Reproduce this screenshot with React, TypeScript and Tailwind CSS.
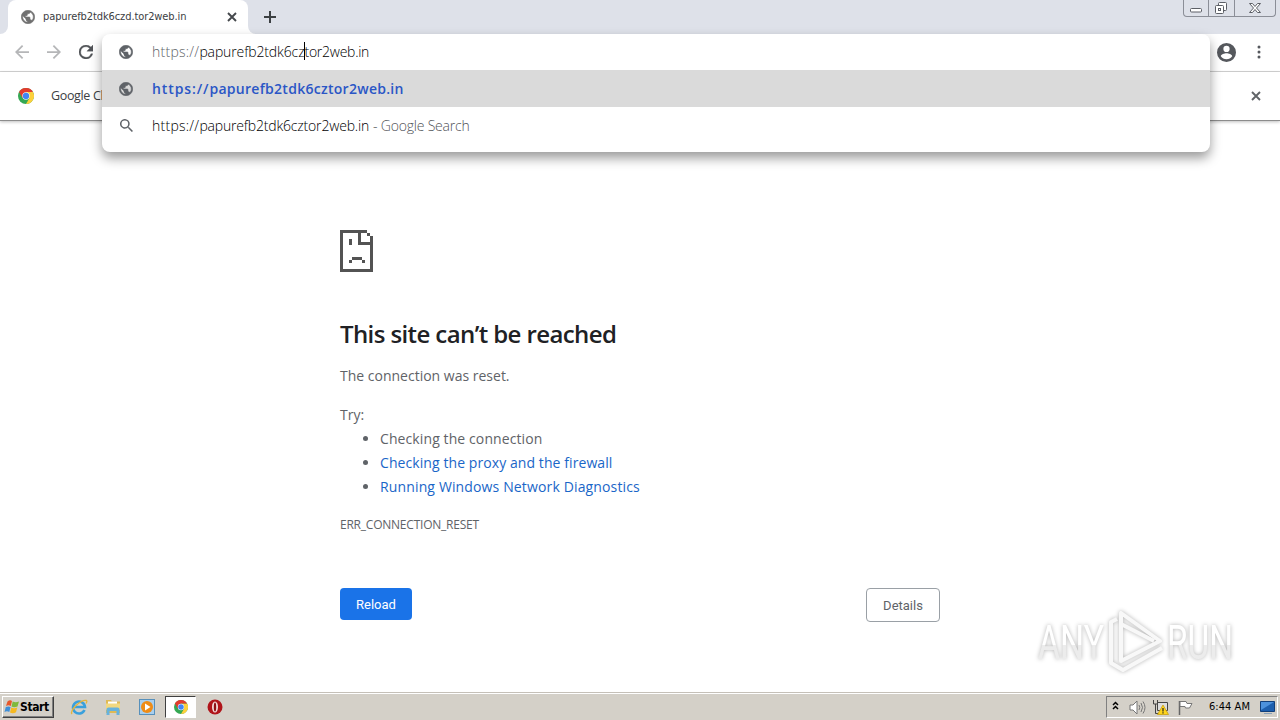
import React from 'react';

const GlobeIcon = ({ size, color }: { size: number; color: string }) => (
  <svg width={size} height={size} viewBox="1.500 1.500 21 21" fill={color} stroke={color} strokeWidth=".9" className="shrink-0">
    <path d="M12 2C6.480 2 2 6.480 2 12s4.480 10 10 10 10-4.480 10-10S17.520 2 12 2zm-1 17.930c-3.950-.490-7-3.850-7-7.930 0-.620.080-1.210.210-1.790L9 15v1c0 1.100.900 2 2 2v1.930zm6.900-2.540c-.260-.810-1-1.390-1.900-1.390h-1v-3c0-.550-.450-1-1-1H8v-2h2c.550 0 1-.450 1-1V7h2c1.100 0 2-.900 2-2v-.410c2.930 1.190 5 4.060 5 7.410 0 2.080-.800 3.970-2.100 5.390z" />
  </svg>
);

const ChromeIcon = ({ size }: { size: number }) => (
  <svg width={size} height={size} viewBox="0 0 48 48" className="shrink-0">
    <circle cx="24" cy="24" r="24" fill="#34a853" />
    <path d="M24 12H44.800A24 24 0 0 1 24 48L34.400 30Z" fill="#fdd03b" />
    <path d="M3.200 12A24 24 0 0 1 44.800 12H24L13.600 30Z" fill="#e33b2e" />
    <circle cx="24" cy="24" r="11" fill="#fff" />
    <circle cx="24" cy="24" r="9.500" fill="#4285f4" />
  </svg>
);

const CloseIcon = ({ size, color }: { size: number; color: string }) => (
  <svg width={size} height={size} viewBox="0 0 10 10" stroke={color} strokeWidth="1.900" className="shrink-0">
    <path d="M1 1 9 9M9 1 1 9" />
  </svg>
);

const TabStrip = () => (
  <div className="flex h-[34px] bg-[#dee1e9]">
    <div className="h-full w-2 bg-white">
      <div className="h-full w-full rounded-br-lg bg-[#dee1e9]" />
    </div>
    <div className="flex h-full w-60 items-center rounded-t-lg bg-white pl-[13px] pr-[11px]">
      <GlobeIcon size={14} color="#707070" />
      <span className="ml-2 mt-px flex-1 whitespace-nowrap font-['DejaVu_Sans_Condensed','DejaVu_Sans',sans-serif] text-[11px] tracking-[-0.100px] text-[#3c4043]">
        papurefb2tdk6czd.tor2web.in
      </span>
      <CloseIcon size={10} color="#45484c" />
    </div>
    <div className="h-full w-2 bg-white">
      <div className="h-full w-full rounded-bl-lg bg-[#dee1e9]" />
    </div>
    <svg width="12" height="12" viewBox="0 0 12 12" stroke="#3c4043" strokeWidth="2" className="ml-2 mt-[11px]">
      <path d="M6 0V12M0 6H12" />
    </svg>
    <div className="ml-auto mr-[4px] flex h-[17px] w-[93px] rounded-b-[4px] border border-t-0 border-[#8b8e97]">
      <svg width="91" height="16" viewBox="0 0 91 16" fill="none" stroke="#5c5f66">
        <path d="M24.500 0V16M50.500 0V16" stroke="#8b8e97" />
        <rect x="6.500" y="8.500" width="11" height="3.500" rx="1" fill="#fff" />
        <rect x="34.500" y="2.500" width="8" height="8" rx="1" fill="#fff" />
        <rect x="31.500" y="5.500" width="8" height="8" rx="1" fill="#fff" />
        <rect x="34.500" y="8.500" width="2" height="2" />
        <path d="M65.500 3.500h3l2.500 3 2.500-3h3l-4 4.500 4 4.500h-3l-2.500-3-2.500 3h-3l4-4.500z" fill="#fff" />
      </svg>
    </div>
  </div>
);

const Toolbar = () => (
  <div className="flex h-[38px] items-center border-b border-[#d5d5d5] bg-white pb-px pl-[15px] pr-[15px]">
    <svg width="14" height="14" viewBox="4 4 16 16" fill="#b5b6b8">
      <path d="M20 11H7.830l5.590-5.590L12 4l-8 8 8 8 1.410-1.410L7.830 13H20v-2z" />
    </svg>
    <svg width="14" height="14" viewBox="4 4 16 16" fill="#b5b6b8" className="ml-[18px]">
      <path d="M12 4l-1.410 1.410L16.170 11H4v2h12.170l-5.580 5.590L12 20l8-8z" />
    </svg>
    <svg width="14" height="14" viewBox="4 4 16 16" fill="#505357" stroke="#505357" strokeWidth=".4" className="ml-[18px]">
      <path d="M17.650 6.350A7.960 7.960 0 0 0 12 4a8 8 0 1 0 7.730 10h-2.080A6 6 0 1 1 12 6c1.660 0 3.140.690 4.220 1.780L13 11h7V4l-2.350 2.350z" />
    </svg>
    <svg width="19" height="19" viewBox="2 2 20 20" fill="#55585d" className="ml-auto">
      <path d="M12 2a10 10 0 1 0 0 20 10 10 0 0 0 0-20zm0 3a3.300 3.300 0 1 1 0 6.600A3.300 3.300 0 0 1 12 5zm0 14.200a7.200 7.200 0 0 1-6-3.220c.030-1.990 4-3.080 6-3.080s5.970 1.090 6 3.080a7.200 7.200 0 0 1-6 3.220z" />
    </svg>
    <svg width="4" height="14" viewBox="0 0 4 14" fill="#55585d" className="ml-[21px] mr-[4px]">
      <circle cx="2" cy="2" r="1.500" />
      <circle cx="2" cy="7" r="1.500" />
      <circle cx="2" cy="12" r="1.500" />
    </svg>
  </div>
);

const Omnibox = () => (
  <div className="absolute left-[102px] top-[34px] h-[118px] w-[1108px] rounded-lg bg-white font-['Open_Sans',sans-serif] text-[14px] shadow-[0_6px_12px_rgba(0,0,0,0.400)]">
    <div className="flex h-9 items-center pb-px pl-[17px]">
      <GlobeIcon size={14} color="#5f6368" />
      <div className="ml-[19px] flex whitespace-nowrap text-black">
        <span className="font-light tracking-[0.250px] text-[#606468]">https://</span>
        <span className="font-light tracking-[-0.120px]">papurefb2tdk6cz</span>
        <span className="-mr-px mt-px h-[18px] w-px bg-black" />
        <span className="font-light tracking-[-0.260px]">tor2web.in</span>
      </div>
    </div>
    <div className="flex h-[37px] items-center bg-[#dadada] pl-[17px]">
      <GlobeIcon size={14} color="#5f6368" />
      <span className="ml-[19px] whitespace-nowrap font-semibold text-[#2a56c6]">
        <span className="tracking-[0.900px]">https://</span>
        <span className="tracking-[0.280px]">papurefb2tdk6cztor2web.in</span>
      </span>
    </div>
    <div className="flex h-[37px] items-center pl-[18px]">
      <svg width="13" height="13" viewBox="3 3 17.500 17.500" fill="#5f6368">
        <path d="M15.500 14h-.790l-.280-.270A6.500 6.500 0 1 0 13.730 14.430l.270.280v.790l5 4.990L20.490 19l-4.990-5zm-6 0a4.500 4.500 0 1 1 0-9 4.500 4.500 0 0 1 0 9z" />
      </svg>
      <span className="ml-[19px] whitespace-nowrap font-light text-black">
        <span className="tracking-[0.250px]">https://</span>
        <span className="tracking-[-0.180px]">papurefb2tdk6cztor2web.in</span>
      </span>
      <span className="ml-1 whitespace-nowrap font-light tracking-[-0.200px] text-[#505357]">- Google Search</span>
    </div>
  </div>
);

const InfoBar = () => (
  <div className="flex h-[49px] items-center border-b border-[#8c8c8c] bg-white pl-[18px] pr-[19px] shadow-[0_1px_3px_rgba(0,0,0,0.250)]">
    <ChromeIcon size={16} />
    <span className="ml-[17px] whitespace-nowrap font-['Open_Sans',sans-serif] text-[12.500px] tracking-[-0.350px] text-[#3c4043]">
      Google Chrome
    </span>
    <span className="ml-auto">
      <CloseIcon size={10} color="#606468" />
    </span>
  </div>
);

const SadPage = () => (
  <svg width="33" height="42" viewBox="0 0 33 42" fill="#535353" shapeRendering="crispEdges">
    <path d="M0 0H27V3H21V12H33V42H0ZM3 3V39H30V15H18V3Z" fillRule="evenodd" />
    <path d="M27 3h3v3h-3zM30 6h3v9h-3zM9 9h3v6H9zM12 27h10v3H12zM9 30h3v3H9zM22 30h3v3h-3z" />
  </svg>
);

const suggestions = [
  { text: 'Checking the connection', className: 'tracking-[0.100px]' },
  { text: 'Checking the proxy and the firewall', className: 'tracking-[0.080px] text-[#1a66c8]' },
  { text: 'Running Windows Network Diagnostics', className: 'tracking-[0.140px] text-[#1a66c8]' },
];

const ErrorPage = () => (
  <div className="flex-1 pl-[340px] pt-[109px] font-['Open_Sans',sans-serif] text-[#5f6368]">
    <SadPage />
    <h1 className="mt-[46px] whitespace-nowrap text-2xl font-semibold tracking-[-0.600px] text-[#202124]">This site can’t be reached</h1>
    <div className="mt-[14px] text-[14px] leading-6">
      <p>The connection was reset.</p>
      <p className="mt-[15px]">Try:</p>
      <ul className="list-disc pl-10">
        {suggestions.map((item) => (
          <li key={item.text}>
            <span className={item.className}>{item.text}</span>
          </li>
        ))}
      </ul>
    </div>
    <div className="mt-[18px] text-[12px] leading-4 tracking-[-0.230px]">ERR_CONNECTION_RESET</div>
    <div className="mt-[55px] flex w-[600px] items-start justify-between font-['Roboto',sans-serif] text-[13px] font-normal">
      <button className="h-8 w-[72px] rounded bg-[#1a73e8] pt-px text-white">Reload</button>
      <button className="h-[34px] w-[74px] rounded border border-[#9aa0a6] bg-white pt-px text-[#5f6368]">Details</button>
    </div>
  </div>
);

const Watermark = () => (
  <div className="absolute left-[1030px] top-[605px]">
    <svg width="250" height="72" viewBox="0 0 250 72" className="drop-shadow-[0_0_2px_rgba(0,0,0,0.300)]">
      <defs>
        <linearGradient id="wm" x1="0" y1="0" x2="0" y2="1">
          <stop offset="0.550" stopColor="#fff" />
          <stop offset="0.550" stopColor="#ececec" />
        </linearGradient>
      </defs>
      <g fill="url(#wm)" fontFamily="Roboto, sans-serif" fontSize="49">
        <text x="8" y="54" textLength="66" lengthAdjust="spacingAndGlyphs">ANY</text>
        <text x="137" y="54" textLength="66" lengthAdjust="spacingAndGlyphs">RUN</text>
      </g>
      <g fill="none" stroke="#f8f8f8" strokeWidth="4" strokeLinejoin="round">
        <path d="M87 14 81 17V58L93 65 132 43" />
        <path d="M91 8V56L130 36Z" />
        <path d="M91 19 124 36" />
      </g>
    </svg>
  </div>
);

const Taskbar = () => (
  <div className="flex h-7 items-center border-t border-[#c5c0b8] bg-[#d4d0c8] pt-px shadow-[inset_0_1px_0_#fff]">
    <div className="ml-0.5 flex h-[22px] w-[52px] items-center border border-b-[#404040] border-l-white border-r-[#404040] border-t-white pl-px shadow-[inset_-1px_-1px_0_#808080]">
      <svg width="16" height="16" viewBox="0 0 16 16" className="shrink-0">
        <path d="M3.500 2.500Q6 .5 8 2L6.800 7Q4.500 5.700 2 7Z" fill="#e8582a" />
        <path d="M8.700 2.500Q11.500 4 15 2.500L13.500 7.500Q10 9 7.500 7.500Z" fill="#7fb93c" />
        <path d="M1.800 8Q4.500 6.800 6.600 8L5.300 13Q3 11.700.5 13Z" fill="#3f8fd8" />
        <path d="M7.300 8.400Q10 10 13.300 8.500L12 13.300Q9 15 6 13.500Z" fill="#f6b921" />
      </svg>
      <span className="font-['DejaVu_Sans_Condensed','DejaVu_Sans',sans-serif] text-[12px] font-bold tracking-[-0.400px] text-black">Start</span>
    </div>
    <svg width="18" height="18" viewBox="0 0 18 18" fill="none" className="ml-[16px]">
      <path d="M14.500 12A6 6 0 1 1 15 9H5" stroke="#3aa0dc" strokeWidth="2.600" />
      <path d="M2 16C-1 13 11 1 16.500 2.500q1 .5-.5 3" stroke="#e5b43a" strokeWidth="1.300" />
    </svg>
    <svg width="18" height="18" viewBox="0 0 18 18" className="ml-[16px]">
      <path d="M2 2h5l1 1.500h8V15H2z" fill="#dfba55" />
      <path d="M4 3.500h9v4H4z" fill="#fff" />
      <path d="M2 5.500h14V12H2z" fill="#f2d880" />
      <path d="M2.500 17v-6q0-1.500 2-1.500h9q2 0 2 1.500v6h-3v-4H5.500v4z" fill="#67b2dd" />
    </svg>
    <svg width="17" height="17" viewBox="0 0 17 17" className="ml-[16px] mt-px">
      <rect x="1.500" y=".5" width="15" height="15" fill="#a9cfee" stroke="#5790bb" />
      <circle cx="9" cy="8" r="6" fill="#ef8c16" />
      <path d="M7 4.500 12.500 8 7 11.500Z" fill="#fff" />
    </svg>
    <div className="ml-[10px] flex h-[22px] w-[31px] items-center justify-center border border-b-white border-l-[#404040] border-r-white border-t-[#404040] bg-white">
      <ChromeIcon size={14} />
    </div>
    <svg width="16" height="16" viewBox="0 0 16 16" className="ml-[11px]">
      <circle cx="8" cy="8" r="7.500" fill="#b0141a" />
      <ellipse cx="8" cy="8" rx="3" ry="5.500" fill="#f4dedd" />
      <ellipse cx="8" cy="8" rx="1.200" ry="4.500" fill="#8f1014" />
    </svg>
    <div className="ml-auto mr-0.5 flex h-[22px] w-[172px] items-center border border-b-white border-l-[#808080] border-r-white border-t-[#808080]">
      <svg width="7" height="9" viewBox="0 0 7 9" fill="none" stroke="#000" strokeWidth="1.500" className="mb-[3px] ml-[5px]">
        <path d="M1 4 3.500 1.500 6 4M1 8 3.500 5.500 6 8" />
      </svg>
      <svg width="17" height="15" viewBox="0 0 17 15" fill="none" stroke="#777" className="ml-[10px]">
        <path d="M1 5h3l4-4v13L4 10H1z" fill="#fff" />
        <path d="M10 5q1.500 2.500 0 5M12 3q3 4.500 0 9M14 1.500q4 6 0 12" />
      </svg>
      <svg width="17" height="16" viewBox="0 0 17 16" className="ml-[6px]">
        <path d="M5.500 3.500h10v8h-10z" fill="#ddd" stroke="#444" />
        <path d="M1.500 1v4h4V1M3.500 5v9.500h4" fill="none" stroke="#444" />
        <path d="M11 6 16.500 15.500H5.500Z" fill="#ffd51c" stroke="#c49a00" strokeWidth=".7" />
        <path d="M11 9v3.500M11 13.300v1.200" stroke="#222" strokeWidth="1.200" />
      </svg>
      <svg width="16" height="15" viewBox="0 0 16 15" className="ml-[8px]">
        <path d="M2.500 1v14" stroke="#666" strokeWidth="1.500" />
        <path d="M3 1.500h6l1 2h5L12.500 8 H8.500L8 6.500H3z" fill="#fff" stroke="#777" />
      </svg>
      <span className="ml-[16px] mt-px whitespace-nowrap font-['DejaVu_Sans_Condensed','DejaVu_Sans',sans-serif] text-[11px] tracking-[0.050px] text-black">6:44 AM</span>
      <svg width="15" height="14" viewBox="0 0 15 14" className="ml-auto mr-[2px] mt-px">
        <path d="M.5.500h14v10H.5z" fill="#1d5fae" stroke="#123f7a" />
        <path d="M1 1h13L1 9z" fill="#4c91dc" />
        <path d="M4 12.500h8" stroke="#8aa1b8" />
      </svg>
    </div>
  </div>
);

const App = () => {
  return (
    <div className="relative flex h-[720px] w-[1280px] flex-col overflow-hidden bg-white">
      <TabStrip />
      <Toolbar />
      <InfoBar />
      <ErrorPage />
      <Taskbar />
      <Omnibox />
      <Watermark />
    </div>
  );
};

export default App;
